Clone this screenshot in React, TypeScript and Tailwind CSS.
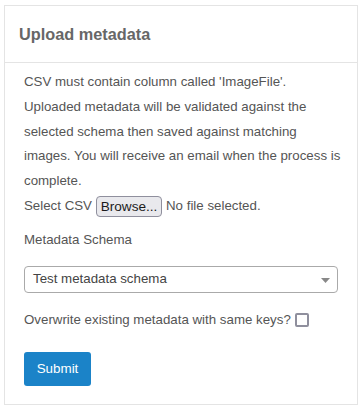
export default function App() {
  return (
    <div className="min-h-screen bg-white pl-[4px] pt-[5px] font-['Liberation_Sans',Arial,sans-serif]">
      <div className="w-[354px] border border-[#e4e4e4] bg-white">
        {/* header */}
        <div className="flex h-[57px] items-center border-b border-[#e4e4e4] px-[14px]">
          <h2 className="text-[16.3px] font-bold text-[#676767]">Upload metadata</h2>
        </div>

        {/* body */}
        <form className="pb-[18px] pl-[19px] pr-[8px] pt-[7px] text-[13.3px] leading-[24.8px] text-[#555]">
          <p>
            CSV must contain column called &#39;ImageFile&#39;.
            <br />
            Uploaded metadata will be validated against the
            <br />
            selected schema then saved against matching
            <br />
            images. You will receive an email when the process is
            <br />
            complete.
          </p>

          <div className="flex items-center">
            <span>Select CSV</span>
            <span className="ml-[4px] flex h-[21px] w-[66px] items-center justify-center rounded-[4px] border border-[#8f8f9d] bg-[#e9e9ed] text-[13.6px] leading-none text-[#1b1b1b]">
              Browse...
            </span>
            <span className="ml-[4px]">No file selected.</span>
          </div>

          <div className="mt-[9px]">Metadata Schema</div>

          <div className="relative mt-[13px] flex h-[27px] w-[314px] items-center rounded-[4px] border border-[#aaa] bg-white pl-[8px] text-[#444]">
            <span>Test metadata schema</span>
            <svg className="absolute right-[7px] top-[11px]" width="9" height="5" viewBox="0 0 9 5">
              <path d="M0 0 L9 0 L4.5 5 Z" fill="#888" />
            </svg>
          </div>

          <div className="mt-[15px] flex items-center">
            <span>Overwrite existing metadata with same keys?</span>
            <span className="ml-[4px] inline-block h-[14px] w-[14px] rounded-[2px] border-2 border-[#8f8f9d] bg-white" />
          </div>

          <button
            type="button"
            className="mt-[20px] flex h-[34px] w-[67px] items-center justify-center rounded-[3px] bg-[#1b83c8] text-[13.4px] text-white"
          >
            Submit
          </button>
        </form>
      </div>
    </div>
  );
}
